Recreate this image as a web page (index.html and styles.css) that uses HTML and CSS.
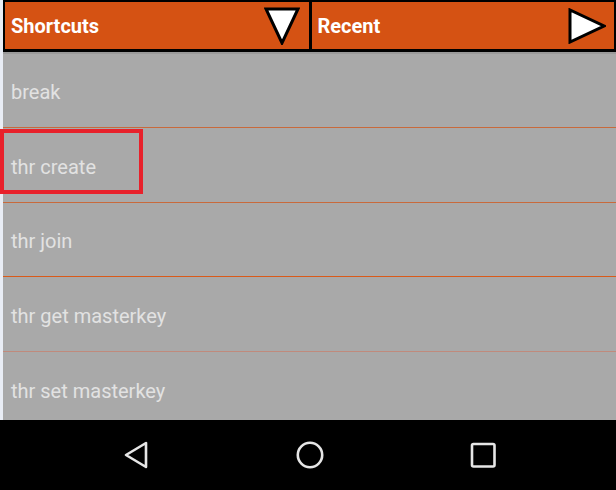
FILE: index.html
```html
<!DOCTYPE html>
<html lang="en">
<head>
    <meta charset="UTF-8">
    <title>Shortcuts</title>
    <link rel="stylesheet" href="styles.css">
</head>
<body>
    <div class="screen">
        <div class="tabs">
            <div class="tab">
                <span>Shortcuts</span>
                <svg class="arrow" width="36" height="38" viewBox="0 0 36 38">
                    <polygon points="2,2 34,2 18,36" fill="#fff" stroke="#000" stroke-width="3" stroke-linejoin="miter"/>
                </svg>
            </div>
            <div class="tab">
                <span>Recent</span>
                <svg class="arrow" width="38" height="36" viewBox="0 0 38 36">
                    <polygon points="2,2 2,34 36,18" fill="#fff" stroke="#000" stroke-width="3" stroke-linejoin="miter"/>
                </svg>
            </div>
        </div>

        <ul class="list">
            <li class="item">break</li>
            <li class="item selected">thr create</li>
            <li class="item accent">thr join</li>
            <li class="item faint">thr get masterkey</li>
            <li class="item">thr set masterkey</li>
        </ul>
    </div>

    <div class="navbar">
        <svg width="30" height="30" viewBox="0 0 30 30">
            <polygon points="24,3 24,27 4,15" fill="none" stroke="#e6e6e6" stroke-width="2.6" stroke-linejoin="round"/>
        </svg>
        <svg width="30" height="30" viewBox="0 0 30 30">
            <circle cx="15" cy="15" r="12.2" fill="none" stroke="#e6e6e6" stroke-width="2.6"/>
        </svg>
        <svg width="30" height="30" viewBox="0 0 30 30">
            <rect x="4" y="4" width="22.5" height="22.5" rx="1.5" fill="none" stroke="#e6e6e6" stroke-width="2.6"/>
        </svg>
    </div>
</body>
</html>
```

FILE: styles.css
```css
body {
    margin: 0;
    height: 490px;
    overflow: hidden;
    display: flex;
    flex-direction: column;
    background: #e9edf5;
    font-family: Roboto, "Liberation Sans", sans-serif;
}

.screen {
    flex: 1;
    min-height: 0;
    display: flex;
    flex-direction: column;
    padding-left: 3px;
    overflow: hidden;
}

.tabs {
    flex-shrink: 0;
    display: flex;
    gap: 3px;
    height: 50px;
    padding: 2px 2px 0 2px;
    background: #000;
    border-bottom: 2px solid #9a9a9a;
}

.tab {
    flex: 1;
    display: flex;
    align-items: center;
    justify-content: space-between;
    background: #d55213;
    color: #fff;
    font-size: 20px;
    font-weight: 700;
    padding: 1px 8px 0 6px;
    margin-bottom: 3px;
}

.tab:first-child {
    padding-right: 9px;
}

.arrow {
    display: block;
}

.list {
    flex: 1;
    min-height: 0;
    margin: 0;
    padding: 0;
    list-style: none;
    background: #a9a9a9;
}

.item {
    height: 74px;
    box-sizing: border-box;
    display: flex;
    align-items: center;
    padding: 3px 0 0 8px;
    color: #e2e2e2;
    font-size: 20px;
    border-bottom: 1px solid #c86a3c;
    position: relative;
}

.item + .item {
    height: 75px;
}

.item.accent {
    height: 74px;
    border-bottom-color: #d95a1a;
}

.item.faint {
    border-bottom-color: #c08a7c;
}

.item.selected::after {
    content: '';
    position: absolute;
    left: -3px;
    top: 1px;
    width: 143px;
    height: 65px;
    border: 4px solid #e8212b;
    box-sizing: border-box;
}

.navbar {
    flex-shrink: 0;
    height: 70px;
    background: #000;
    display: flex;
    align-items: center;
    justify-content: center;
    gap: 143px;
    padding-left: 3px;
}

.navbar svg {
    display: block;
}
```
